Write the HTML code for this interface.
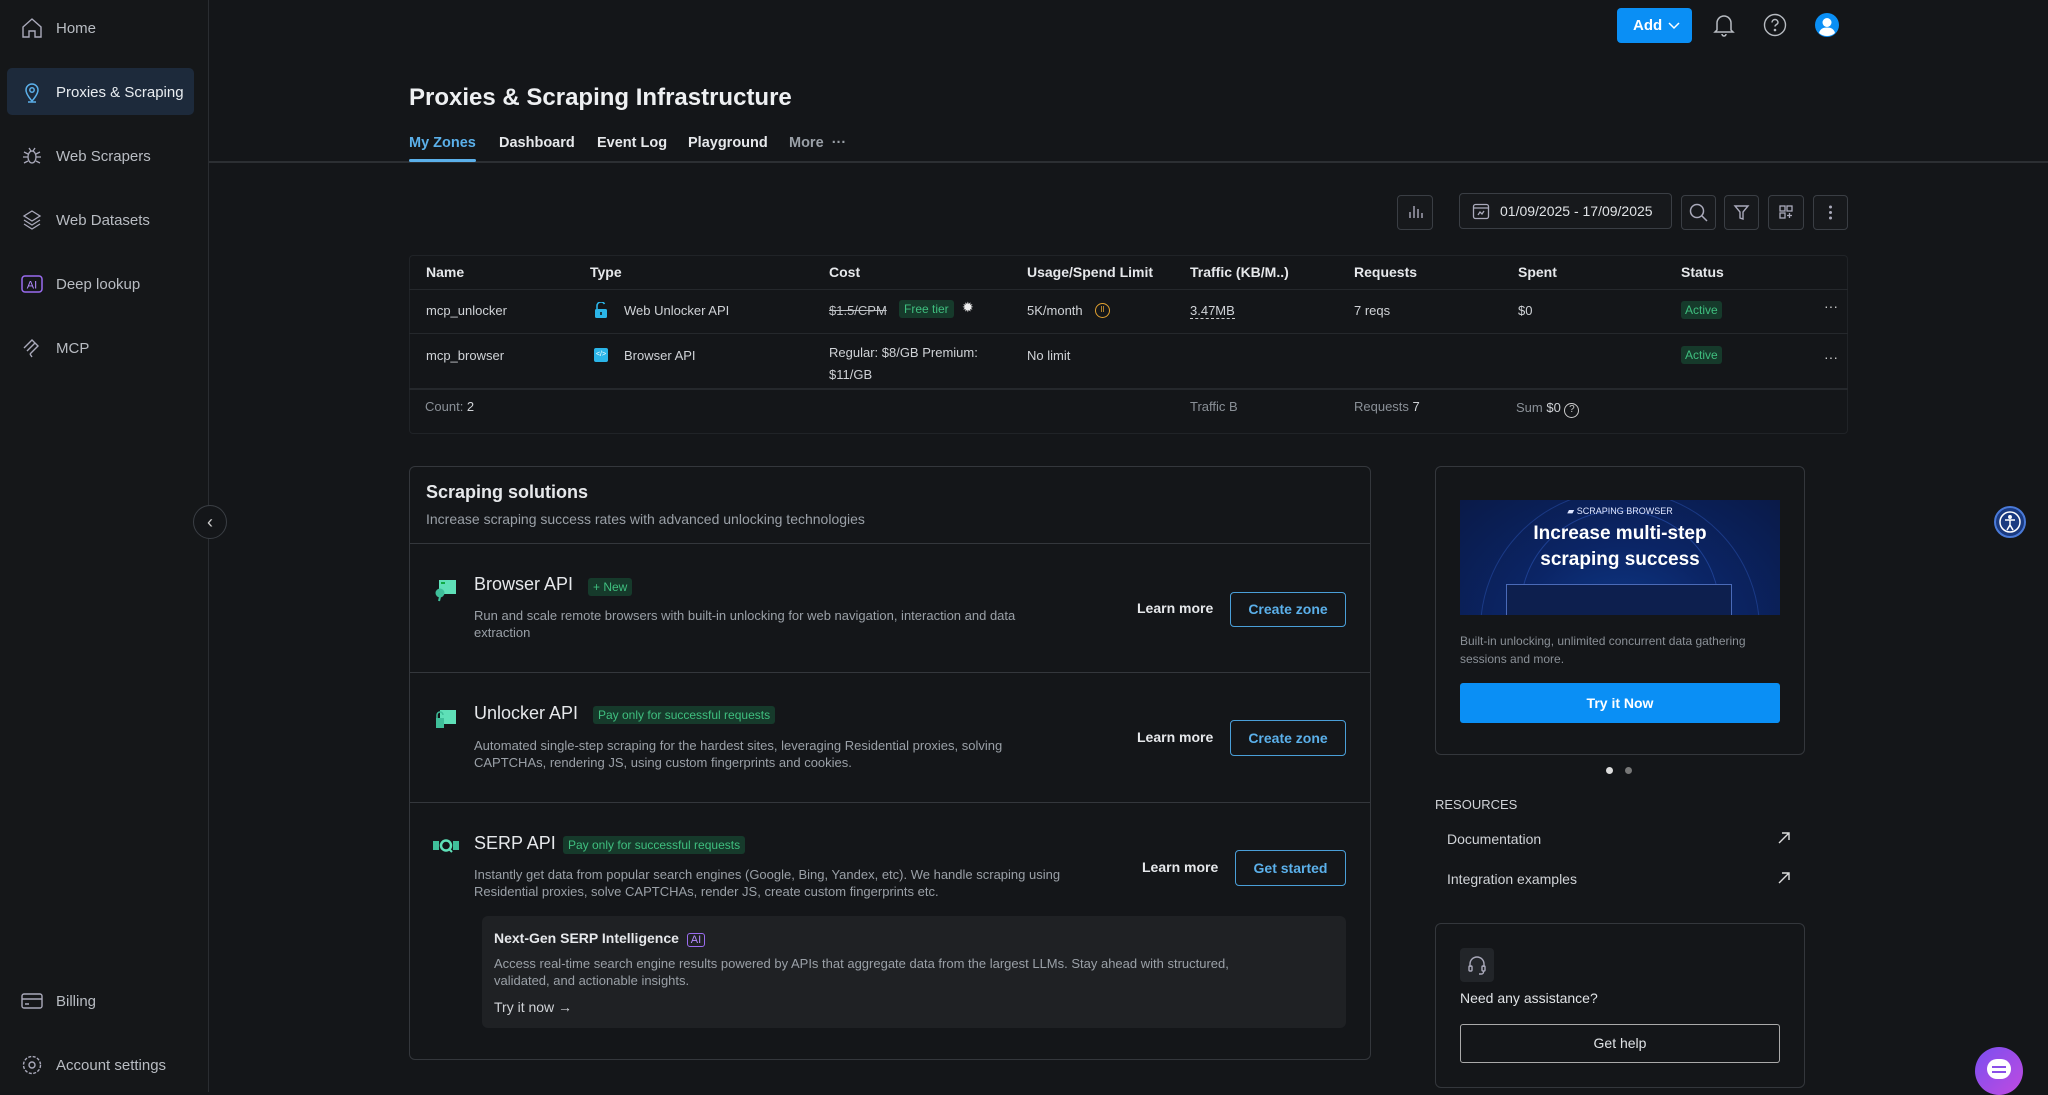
<!DOCTYPE html>
<html><head><meta charset="utf-8"><style>
*{box-sizing:border-box;margin:0;padding:0}
body{width:2048px;height:1092px;background:#141619;font-family:"Liberation Sans",sans-serif;color:#e6e8eb;position:relative;overflow:hidden}
.a{position:absolute;white-space:nowrap}
.side{position:absolute;left:0;top:0;width:209px;height:1092px;border-right:1px solid #2a2d31;background:#151719}
.ni{position:absolute;left:0;width:209px;font-size:15px;color:#b8bcc2}
.ni svg{position:absolute;left:20px;top:-11px}
.ni span{position:absolute;left:56px;top:-7px}
.btn{position:absolute;border:1px solid #3a3e44;border-radius:4px;background:#17191c}
.th{font-size:14px;color:#e6e8eb;font-weight:600}
.td{font-size:13px;color:#d0d3d7}
.hl{position:absolute;left:409px;width:1439px;height:1px;background:#25282c}
.tag{display:inline-block;background:#163a2b;color:#3fbf7f;font-size:12px;padding:2px 5px;border-radius:3px}
.ob{position:absolute;border:1px solid #4a9fd8;border-radius:4px;color:#5bb0ea;font-size:14px;text-align:center;font-weight:600}
.lm{font-size:14px;font-weight:600;color:#e6e8eb}
.t1{font-size:18px;color:#e6e8eb}
.ds{font-size:13px;color:#9aa0a7;line-height:17px}
.tab{font-size:14.5px;font-weight:600}
</style></head><body>
<div class="side">
 <div style="position:absolute;left:7px;top:68px;width:187px;height:47px;background:#1d2a3b;border-radius:5px"></div>
 <div class="ni" style="top:27px"><svg width="24" height="24" viewBox="0 0 24 24" fill="none" stroke="#aab" stroke-width="1.4"><path d="M3 11L12 3l9 8v10H15v-6h-6v6H3z"/></svg><span>Home</span></div>
 <div class="ni" style="top:91px;color:#e8ecf0"><svg width="24" height="24" viewBox="0 0 24 24" fill="none" stroke="#5bb0ea" stroke-width="1.5"><path d="M12 21s-6-6.5-6-11a6 6 0 0112 0c0 4.5-6 11-6 11z"/><circle cx="12" cy="10" r="2.2"/><path d="M8 22h8"/></svg><span>Proxies &amp; Scraping</span></div>
 <div class="ni" style="top:155px"><svg width="24" height="24" viewBox="0 0 24 24" fill="none" stroke="#aab" stroke-width="1.3"><ellipse cx="12" cy="13" rx="4" ry="6"/><path d="M4 8l4 2M20 8l-4 2M3 13h5M21 13h-5M4 19l4-2M20 19l-4-2M9 4l2 3M15 4l-2 3"/></svg><span>Web Scrapers</span></div>
 <div class="ni" style="top:219px"><svg width="24" height="24" viewBox="0 0 24 24" fill="none" stroke="#aab" stroke-width="1.3"><path d="M12 3l8 5-8 5-8-5z"/><path d="M4 12l8 5 8-5M4 16l8 5 8-5"/></svg><span>Web Datasets</span></div>
 <div class="ni" style="top:283px"><svg width="24" height="24" viewBox="0 0 24 24"><rect x="2" y="4" width="20" height="16" rx="3" fill="none" stroke="#9a6cf0" stroke-width="1.5"/><text x="12" y="16.5" font-size="11" fill="#b48cff" text-anchor="middle" font-family="Liberation Sans">AI</text></svg><span>Deep lookup</span></div>
 <div class="ni" style="top:347px"><svg width="24" height="24" viewBox="0 0 24 24" fill="none" stroke="#aab" stroke-width="1.4"><path d="M4 12l8-8 3 3-8 8M7 15l8-8 3 3-8 8M10 18l2 3"/></svg><span>MCP</span></div>
 <div class="ni" style="top:1000px"><svg width="24" height="24" viewBox="0 0 24 24" fill="none" stroke="#aab" stroke-width="1.4"><rect x="2" y="5" width="20" height="14" rx="2"/><path d="M2 10h20M5 15h4"/></svg><span>Billing</span></div>
 <div class="ni" style="top:1064px"><svg width="24" height="24" viewBox="0 0 24 24" fill="none" stroke="#aab" stroke-width="1.4"><circle cx="12" cy="12" r="3"/><circle cx="12" cy="12" r="8.5" stroke-dasharray="3 1.5"/></svg><span>Account settings</span></div>
</div>
<div class="a" style="left:193px;top:505px;width:34px;height:34px;border:1px solid #3a3e44;border-radius:50%;background:#141619;text-align:center;line-height:32px;color:#ccc;font-size:18px">&#8249;</div>

<div class="a" style="left:1617px;top:8px;width:75px;height:35px;background:#0a8ff5;border-radius:4px;color:#fff;font-weight:600;font-size:15px;line-height:35px;padding-left:16px">Add <svg width="12" height="8" viewBox="0 0 12 8" style="margin-left:2px"><path d="M1 1l5 5 5-5" stroke="#fff" fill="none" stroke-width="1.5"/></svg></div>
<svg class="a" style="left:1712px;top:12px" width="24" height="26" viewBox="0 0 24 26" fill="none" stroke="#b8bcc2" stroke-width="1.5"><path d="M5 18V11a7 7 0 0114 0v7l2 2H3z"/><path d="M10 22a2 2 0 004 0"/></svg>
<svg class="a" style="left:1763px;top:13px" width="24" height="24" viewBox="0 0 24 24" fill="none" stroke="#b8bcc2" stroke-width="1.4"><circle cx="12" cy="12" r="10.5"/><path d="M9 9.5a3 3 0 116 0c0 2-3 2-3 4"/><circle cx="12" cy="17" r=".6" fill="#b8bcc2"/></svg>
<svg class="a" style="left:1815px;top:13px" width="24" height="24" viewBox="0 0 24 24"><circle cx="12" cy="12" r="12" fill="#0a8ff5"/><circle cx="12" cy="9.5" r="4.5" fill="#fff"/><path d="M4 20c1-4 4-5.5 8-5.5s7 1.5 8 5.5a12 12 0 01-16 0z" fill="#fff"/></svg>

<div class="a" style="left:409px;top:84px;font-size:24px;font-weight:600;color:#eef0f2">Proxies &amp; Scraping Infrastructure</div>
<div class="a tab" style="left:409px;top:135px;color:#5bb0ea">My Zones</div>
<div class="a tab" style="left:499px;top:135px">Dashboard</div>
<div class="a tab" style="left:597px;top:135px">Event Log</div>
<div class="a tab" style="left:688px;top:135px">Playground</div>
<div class="a tab" style="left:789px;top:135px;color:#9aa0a7">More &nbsp;···</div>
<div class="a" style="left:209px;top:161px;width:1839px;height:2px;background:#2c2f33"></div>
<div class="a" style="left:409px;top:159px;width:67px;height:3px;background:#5bb0ea;border-radius:2px"></div>

<div class="btn" style="left:1397px;top:195px;width:36px;height:35px"><svg width="34" height="33" viewBox="0 0 34 33" stroke="#aab" stroke-width="1.4"><path d="M12 22v-6M16 22V10M20 22v-9M24 22v-5"/></svg></div>
<div class="btn" style="left:1459px;top:193px;width:213px;height:36px;font-size:14px;color:#e0e3e6;line-height:34px;padding-left:40px">01/09/2025 - 17/09/2025<svg style="position:absolute;left:12px;top:8px" width="18" height="18" viewBox="0 0 18 18" fill="none" stroke="#aab" stroke-width="1.3"><rect x="1.5" y="2.5" width="15" height="14" rx="2"/><path d="M1.5 6h15M6 13l2-3 2 2 2-3"/></svg></div>
<div class="btn" style="left:1681px;top:195px;width:35px;height:35px"><svg width="33" height="33" viewBox="0 0 33 33" fill="none" stroke="#aab" stroke-width="1.5"><circle cx="15" cy="15" r="6.5"/><path d="M20 20l5 5"/></svg></div>
<div class="btn" style="left:1724px;top:195px;width:35px;height:35px"><svg width="33" height="33" viewBox="0 0 33 33" fill="none" stroke="#aab" stroke-width="1.4"><path d="M10 10h13l-5 6v7l-3-1v-6z"/></svg></div>
<div class="btn" style="left:1768px;top:195px;width:36px;height:35px"><svg width="34" height="33" viewBox="0 0 34 33" fill="none" stroke="#aab" stroke-width="1.3"><rect x="11" y="10" width="5" height="5"/><rect x="18" y="10" width="5" height="5"/><rect x="11" y="17" width="5" height="5"/><path d="M20.5 17v5M18 19.5h5"/></svg></div>
<div class="btn" style="left:1813px;top:195px;width:35px;height:35px"><svg width="33" height="33" viewBox="0 0 33 33" fill="#aab"><circle cx="16.5" cy="11" r="1.5"/><circle cx="16.5" cy="16.5" r="1.5"/><circle cx="16.5" cy="22" r="1.5"/></svg></div>

<div class="a" style="left:409px;top:255px;width:1439px;height:179px;border:1px solid #202327;border-radius:4px;background:#141619"></div>
<div class="hl" style="top:289px"></div><div class="hl" style="top:333px"></div><div class="hl" style="top:388px;height:2px"></div>
<div class="a th" style="left:426px;top:264px">Name</div>
<div class="a th" style="left:590px;top:264px">Type</div>
<div class="a th" style="left:829px;top:264px">Cost</div>
<div class="a th" style="left:1027px;top:264px">Usage/Spend Limit</div>
<div class="a th" style="left:1190px;top:264px">Traffic (KB/M..)</div>
<div class="a th" style="left:1354px;top:264px">Requests</div>
<div class="a th" style="left:1518px;top:264px">Spent</div>
<div class="a th" style="left:1681px;top:264px">Status</div>

<div class="a td" style="left:426px;top:303px">mcp_unlocker</div>
<svg class="a" style="left:594px;top:302px" width="14" height="17" viewBox="0 0 14 17"><path d="M3 7V4a4 4 0 017.5-2" stroke="#2bb5e8" stroke-width="1.6" fill="none"/><rect x="1" y="7" width="12" height="9" rx="1.5" fill="#2bb5e8"/><rect x="6.2" y="10" width="1.6" height="3" fill="#141619"/></svg>
<div class="a td" style="left:624px;top:303px">Web Unlocker API</div>
<div class="a td" style="left:829px;top:303px;text-decoration:line-through;color:#c0c3c7">$1.5/CPM</div>
<div class="a tag" style="left:899px;top:300px">Free tier</div>
<div class="a" style="left:962px;top:299px;color:#eee;font-size:14px">✹</div>
<div class="a td" style="left:1027px;top:303px">5K/month</div>
<div class="a" style="left:1095px;top:303px;width:15px;height:15px;border:1.5px solid #e0a030;border-radius:50%;font-size:8px;color:#e0a030;text-align:center;line-height:12px">II</div>
<div class="a td" style="left:1190px;top:303px;border-bottom:1px dashed #ccc">3.47MB</div>
<div class="a td" style="left:1354px;top:303px">7 reqs</div>
<div class="a td" style="left:1518px;top:303px">$0</div>
<div class="a" style="left:1681px;top:301px;background:#163a2b;color:#3fbf7f;font-size:12px;padding:2px 4px;border-radius:3px">Active</div>
<div class="a" style="left:1824px;top:298px;color:#ccc;font-size:14px">···</div>

<div class="a td" style="left:426px;top:348px">mcp_browser</div>
<div class="a" style="left:594px;top:348px;width:14px;height:14px;background:#2bb5e8;border-radius:2px;font-size:7px;color:#fff;text-align:center;line-height:14px">&lt;/&gt;</div>
<div class="a td" style="left:624px;top:348px">Browser API</div>
<div class="a td" style="left:829px;top:342px;line-height:22px">Regular: $8/GB Premium:<br>$11/GB</div>
<div class="a td" style="left:1027px;top:348px">No limit</div>
<div class="a" style="left:1681px;top:346px;background:#163a2b;color:#3fbf7f;font-size:12px;padding:2px 4px;border-radius:3px">Active</div>
<div class="a" style="left:1824px;top:349px;color:#ccc;font-size:14px">···</div>

<div class="a td" style="left:425px;top:399px;color:#8a9097">Count: <span style="color:#d0d3d7">2</span></div>
<div class="a td" style="left:1190px;top:399px;color:#8a9097">Traffic B</div>
<div class="a td" style="left:1354px;top:399px;color:#8a9097">Requests <span style="color:#d0d3d7">7</span></div>
<div class="a td" style="left:1516px;top:400px;color:#8a9097">Sum <span style="color:#d0d3d7">$0</span> <span style="display:inline-block;width:15px;height:15px;border:1.4px solid #ccc;border-radius:50%;font-size:10px;text-align:center;line-height:12px;color:#ccc">?</span></div>

<div class="a" style="left:409px;top:466px;width:962px;height:594px;border:1px solid #34373c;border-radius:6px"></div>
<div class="a" style="left:426px;top:482px;font-size:18px;font-weight:600">Scraping solutions</div>
<div class="a" style="left:426px;top:511px;font-size:14px;color:#9aa0a7">Increase scraping success rates with advanced unlocking technologies</div>
<div class="a" style="left:410px;top:543px;width:960px;height:1px;background:#34373c"></div>
<div class="a" style="left:410px;top:672px;width:960px;height:1px;background:#34373c"></div>
<div class="a" style="left:410px;top:802px;width:960px;height:1px;background:#34373c"></div>

<svg class="a" style="left:434px;top:578px" width="24" height="24" viewBox="0 0 24 24"><rect x="5" y="2" width="17" height="14" fill="#5fe0b8"/><rect x="7" y="4" width="4" height="2" fill="#1a4"/><circle cx="6" cy="15" r="4.5" fill="#3fbf9a"/><path d="M6 19l-1 4" stroke="#3fbf9a" stroke-width="2"/></svg>
<div class="a t1" style="left:474px;top:574px">Browser API</div>
<div class="a tag" style="left:588px;top:578px">+ New</div>
<div class="a ds" style="left:474px;top:607px">Run and scale remote browsers with built-in unlocking for web navigation, interaction and data<br>extraction</div>
<div class="a lm" style="left:1137px;top:600px">Learn more</div>
<div class="ob" style="left:1230px;top:592px;width:116px;height:35px;line-height:33px">Create zone</div>

<svg class="a" style="left:434px;top:707px" width="24" height="24" viewBox="0 0 24 24"><rect x="6" y="3" width="16" height="14" fill="#5fe0b8"/><rect x="2" y="11" width="8" height="10" fill="#3fbf9a"/><path d="M3 11V8a3 3 0 016 0" stroke="#3fbf9a" stroke-width="1.5" fill="none"/></svg>
<div class="a t1" style="left:474px;top:703px">Unlocker API</div>
<div class="a tag" style="left:593px;top:706px">Pay only for successful requests</div>
<div class="a ds" style="left:474px;top:737px">Automated single-step scraping for the hardest sites, leveraging Residential proxies, solving<br>CAPTCHAs, rendering JS, using custom fingerprints and cookies.</div>
<div class="a lm" style="left:1137px;top:729px">Learn more</div>
<div class="ob" style="left:1230px;top:720px;width:116px;height:36px;line-height:34px">Create zone</div>

<svg class="a" style="left:433px;top:838px" width="26" height="16" viewBox="0 0 26 16"><rect x="0" y="3" width="6" height="9" fill="#3fbf9a"/><circle cx="13" cy="7.5" r="5" fill="none" stroke="#5fe0b8" stroke-width="2.5"/><path d="M16 11l3 3" stroke="#5fe0b8" stroke-width="2"/><rect x="20" y="3" width="6" height="9" fill="#3fbf9a"/></svg>
<div class="a t1" style="left:474px;top:833px">SERP API</div>
<div class="a tag" style="left:563px;top:836px">Pay only for successful requests</div>
<div class="a ds" style="left:474px;top:866px">Instantly get data from popular search engines (Google, Bing, Yandex, etc). We handle scraping using<br>Residential proxies, solve CAPTCHAs, render JS, create custom fingerprints etc.</div>
<div class="a lm" style="left:1142px;top:859px">Learn more</div>
<div class="ob" style="left:1235px;top:850px;width:111px;height:36px;line-height:34px">Get started</div>

<div class="a" style="left:482px;top:916px;width:864px;height:112px;background:#1f2124;border-radius:6px"></div>
<div class="a" style="left:494px;top:930px;font-size:14px;font-weight:600">Next-Gen SERP Intelligence <span style="display:inline-block;border:1.3px solid #9a6cf0;color:#b48cff;border-radius:3px;font-size:11px;padding:0 3px;font-weight:400;margin-left:4px">AI</span></div>
<div class="a ds" style="left:494px;top:955px">Access real-time search engine results powered by APIs that aggregate data from the largest LLMs. Stay ahead with structured,<br>validated, and actionable insights.</div>
<div class="a" style="left:494px;top:999px;font-size:14px;color:#d0d3d7">Try it now →</div>

<div class="a" style="left:1435px;top:466px;width:370px;height:289px;border:1px solid #34373c;border-radius:6px"></div>
<div class="a" style="left:1460px;top:500px;width:320px;height:115px;background:radial-gradient(ellipse at 50% 110%,#0f3a8a 0%,#0b2566 45%,#0a1a48 100%);overflow:hidden">
 <div class="a" style="left:60px;top:10px;width:200px;height:200px;border:1px solid #2a52b0;border-radius:50%;opacity:.6"></div>
 <div class="a" style="left:20px;top:-10px;width:280px;height:280px;border:1px solid #2a52b0;border-radius:50%;opacity:.5"></div>
 <div class="a" style="left:0;top:6px;width:320px;text-align:center;font-size:9px;color:#dfe6ff">▰ SCRAPING BROWSER</div>
 <div class="a" style="left:0;top:21px;width:320px;text-align:center;font-size:19px;font-weight:700;color:#fff;line-height:26px">Increase multi-step<br>scraping success</div>
 <div class="a" style="left:46px;top:84px;width:226px;height:40px;border:1px solid #4a6ab8;background:#0d1f4e"></div>
</div>
<div class="a" style="left:1460px;top:632px;font-size:12px;color:#8a9097;line-height:18px">Built-in unlocking, unlimited concurrent data gathering<br>sessions and more.</div>
<div class="a" style="left:1460px;top:683px;width:320px;height:40px;background:#0a8ff5;border-radius:3px;color:#fff;font-weight:600;font-size:14px;text-align:center;line-height:40px">Try it Now</div>
<div class="a" style="left:1606px;top:767px;width:7px;height:7px;border-radius:50%;background:#ddd"></div>
<div class="a" style="left:1625px;top:767px;width:7px;height:7px;border-radius:50%;background:#777"></div>
<div class="a" style="left:1435px;top:797px;font-size:13px;color:#d0d3d7">RESOURCES</div>
<div class="a" style="left:1447px;top:831px;font-size:14px;color:#d0d3d7">Documentation</div>
<div class="a" style="left:1447px;top:871px;font-size:14px;color:#d0d3d7">Integration examples</div>
<svg class="a" style="left:1777px;top:831px" width="14" height="14" viewBox="0 0 14 14" stroke="#ddd" stroke-width="1.4" fill="none"><path d="M2 12L12 2M5 2h7v7"/></svg>
<svg class="a" style="left:1777px;top:871px" width="14" height="14" viewBox="0 0 14 14" stroke="#ddd" stroke-width="1.4" fill="none"><path d="M2 12L12 2M5 2h7v7"/></svg>

<div class="a" style="left:1435px;top:923px;width:370px;height:165px;border:1px solid #34373c;border-radius:6px"></div>
<div class="a" style="left:1460px;top:948px;width:34px;height:34px;background:#222529;border-radius:4px"><svg width="34" height="34" viewBox="0 0 34 34" fill="none" stroke="#aab" stroke-width="1.4"><path d="M10 19v-3a7 7 0 0114 0v3"/><rect x="9" y="18" width="3" height="5" rx="1"/><rect x="22" y="18" width="3" height="5" rx="1"/><path d="M23.5 23v1a2 2 0 01-2 2H19"/></svg></div>
<div class="a" style="left:1460px;top:990px;font-size:14px;color:#e0e3e6">Need any assistance?</div>
<div class="a" style="left:1460px;top:1024px;width:320px;height:39px;border:1px solid #aaa;border-radius:3px;text-align:center;line-height:37px;font-size:14px;color:#e0e3e6">Get help</div>

<div class="a" style="left:1994px;top:506px;width:32px;height:32px;border-radius:50%;background:#1a3a80;border:2px solid #4a7ad8"><svg width="28" height="28" viewBox="0 0 28 28" fill="none" stroke="#fff" stroke-width="1.5"><circle cx="14" cy="14" r="10"/><circle cx="14" cy="9" r="1.2" fill="#fff"/><path d="M9 12h10M14 12v5l-3 5M14 17l3 5"/></svg></div>
<div class="a" style="left:1975px;top:1047px;width:48px;height:48px;border-radius:50%;background:linear-gradient(135deg,#7a4ff0,#c04ae0)"><div class="a" style="left:12px;top:12px;width:24px;height:20px;background:#fff;border-radius:10px"></div><div class="a" style="left:17px;top:19px;width:14px;height:2px;background:#8a4fe8"></div><div class="a" style="left:17px;top:24px;width:14px;height:2px;background:#8a4fe8"></div></div>
</body></html>
